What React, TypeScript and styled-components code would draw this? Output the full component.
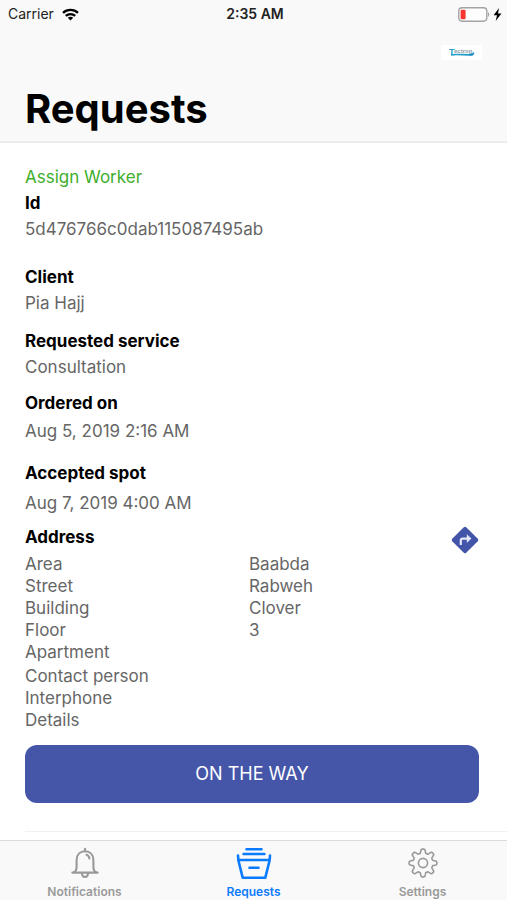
import React from "react";
import styled, { createGlobalStyle } from "styled-components";

const GlobalStyle = createGlobalStyle`
  * { box-sizing: border-box; }
  body {
    margin: 0;
    background: #fff;
    color: #000;
    font-family: Inter, "Liberation Sans", sans-serif;
  }
`;

const Screen = styled.div`
  min-height: 100vh;
  display: flex;
  flex-direction: column;
`;

const Header = styled.header`
  background: #f9f9f9;
  border-bottom: 2px solid #ececec;
`;

const StatusBar = styled.div`
  display: grid;
  grid-template-columns: 1fr auto 1fr;
  align-items: center;
  height: 28px;
  padding: 0 5px 0 8px;
  font-size: 14px;
  line-height: 20px;
  color: #222;
`;

const Carrier = styled.div`
  display: flex;
  align-items: center;
  gap: 8px;
`;

const Clock = styled.time`
  font-weight: 600;
`;

const Power = styled.div`
  display: flex;
  align-items: center;
  justify-content: flex-end;
  gap: 3px;
`;

const NavBar = styled.div`
  display: flex;
  justify-content: flex-end;
  padding: 17px 25px 0;
`;

const Title = styled.h1`
  margin: 0;
  padding: 25px 25px 8px;
  font-size: 40px;
  line-height: 48px;
  font-weight: 700;
`;

const Main = styled.main`
  flex: 1;
  padding-left: 25px;
`;

const Card = styled.article`
  display: flex;
  flex-direction: column;
  align-items: stretch;
  padding: 22px 28px 28px 0;
  border-bottom: 1px solid #f0f0f0;
`;

const AssignButton = styled.button`
  align-self: flex-start;
  margin: 0 0 3px;
  padding: 0;
  border: 0;
  background: none;
  font: inherit;
  font-size: 17px;
  line-height: 24px;
  color: #3fae2a;
  cursor: pointer;
`;

const Field = styled.section<{ $gap: number; $after: number }>`
  display: flex;
  flex-direction: column;
  gap: ${(p) => p.$gap}px;
  padding-bottom: ${(p) => p.$after}px;
`;

const Label = styled.h2`
  margin: 0;
  font-size: 17px;
  line-height: 22px;
  font-weight: 700;
`;

const Value = styled.p`
  margin: 0;
  font-size: 17px;
  line-height: 22px;
  color: #666;
`;

const AddressHead = styled.div`
  display: flex;
  align-items: flex-start;
  justify-content: space-between;
  height: 27px;
`;

const RouteButton = styled.button`
  display: flex;
  padding: 0;
  border: 0;
  background: none;
  cursor: pointer;
`;

const AddressList = styled.dl`
  display: grid;
  grid-template-columns: 1fr 1fr;
  margin: 0;
  padding-bottom: 2px;
  font-size: 17px;
  line-height: 22px;
  color: #666;
`;

const Term = styled.dt`
  grid-column: 1;
`;

const Detail = styled.dd`
  margin: 0 0 0 -3px;
`;

const PrimaryButton = styled.button`
  height: 58px;
  margin-top: 12px;
  border: 0;
  border-radius: 12px;
  background: #4556a9;
  color: #fff;
  font: inherit;
  font-size: 18px;
  line-height: 24px;
  cursor: pointer;
`;

const TabBar = styled.nav`
  position: sticky;
  bottom: 0;
  display: grid;
  grid-template-columns: repeat(3, 1fr);
  height: 60px;
  background: #f9f9f9;
  border-top: 1px solid #dcdcdc;
`;

const Tab = styled.a<{ $active?: boolean }>`
  display: flex;
  flex-direction: column;
  align-items: center;
  gap: 3px;
  padding-top: 4px;
  color: ${(p) => (p.$active ? "#0a7aff" : "#999")};
  font-size: 12px;
  line-height: 16px;
  font-weight: 600;
  text-decoration: none;
`;

const WifiIcon = () => (
  <svg width="17" height="13" viewBox="0 0 17 13" fill="none" stroke="#000" strokeWidth="2.3" aria-hidden="true">
    <path d="M1 4.8C5.2.9 11.8.9 16 4.8" />
    <path d="M3.8 7.9C6.4 5.4 10.6 5.4 13.2 7.9" />
    <path d="M8.5 12.6 5.8 9.8C7.3 8.5 9.7 8.5 11.2 9.8Z" fill="#000" stroke="none" />
  </svg>
);

const BatteryIcon = () => (
  <svg width="32" height="15" viewBox="0 0 32 15" role="img" aria-label="Battery low">
    <rect x="0.8" y="0.8" width="28" height="13.4" rx="3.4" fill="#fdfdfd" stroke="#a3a3a3" strokeWidth="1.4" />
    <rect x="2.6" y="2.8" width="5" height="9.4" rx="1.2" fill="#fa3530" />
    <path d="M30 5.2c1.6.5 1.6 4.1 0 4.6Z" fill="#a3a3a3" />
  </svg>
);

const BoltIcon = () => (
  <svg width="9" height="13" viewBox="0 0 9 13" role="img" aria-label="Charging">
    <path d="M6 0 .6 7.2H4L2.7 13 8.5 5.4H5Z" fill="#000" />
  </svg>
);

const BrandLogo = () => (
  <svg width="41" height="15" viewBox="0 0 41 15" role="img" aria-label="Brand">
    <rect width="41" height="15" fill="#fff" />
    <text x="8" y="9.5" fontFamily="Liberation Sans, sans-serif" fontSize="9" fontWeight="700" fill="#259fc8">T</text>
    <text x="13" y="8" fontFamily="Liberation Sans, sans-serif" fontSize="6" fontWeight="700" fill="#8a9ba3">ectron</text>
    <path d="M10 9.8C16 9 23 10 29 9.8" fill="none" stroke="#259fc8" strokeWidth="1.7" />
    <path d="M28 9.4c1.2-1.500 2.700.4 4.800-1.800.7 3-3.500 4-4.800 1.800Z" fill="#168cc0" stroke="#168cc0" strokeWidth=".7" />
  </svg>
);

const RouteIcon = () => (
  <svg width="28" height="28" viewBox="0 0 28 28" aria-hidden="true">
    <path d="M12.8 1.2q1.2-1 2.4 0l11.6 11.6q1 1.2 0 2.4L15.2 26.8q-1.2 1-2.4 0L1.2 15.2q-1-1.2 0-2.4Z" fill="#4355a9" />
    <path d="M9.8 19v-4.4q0-2 2-2h6" fill="none" stroke="#e4e8fa" strokeWidth="2.2" />
    <path d="M15.8 8.2 20.4 12.6 15.8 17Z" fill="#e4e8fa" />
  </svg>
);

const BellIcon = () => (
  <svg width="36" height="36" viewBox="0 0 36 36" fill="none" stroke="currentColor" strokeWidth="2.1" strokeLinecap="round" strokeLinejoin="round" aria-hidden="true">
    <path d="M18 3.7v2.5" />
    <path d="M5.3 27.6h25.4" />
    <path d="M7 27.2c2.2-1 2.6-2.7 2.6-6v-6C9.6 9.8 13 6.3 18 6.3s8.4 3.5 8.4 8.9v6c0 3.3.4 5 2.6 6" />
    <path d="M15 28c0 5.2 6 5.2 6 0" />
    <path d="M19.5 9.8c2 .6 2.7 1.7 2.9 3.7" />
  </svg>
);

const RequestsIcon = () => (
  <svg width="36" height="36" viewBox="0 0 36 36" fill="none" stroke="currentColor" strokeWidth="2.6" strokeLinecap="round" strokeLinejoin="round" aria-hidden="true">
    <path d="M10.5 4.2h15M7.6 9h20.8" />
    <path d="M2 10.5 2.3 15 6.7 32.8H29.3L33.7 15 34 10.5" />
    <path d="M2.8 15h30.4M13.5 22.7h9" />
  </svg>
);

const gearPoints = (() => {
  const steps = 96;
  const pts: string[] = [];
  for (let i = 0; i < steps; i++) {
    const a = (i / steps) * Math.PI * 2;
    const wave = Math.tanh(2.2 * Math.cos(8 * a)) / Math.tanh(2.2);
    const r = 11.9 + 2 * wave;
    pts.push(`${(18 + r * Math.sin(a)).toFixed(2)},${(18 - r * Math.cos(a)).toFixed(2)}`);
  }
  return pts.join(" ");
})();

const GearIcon = () => (
  <svg width="36" height="36" viewBox="0 0 36 36" fill="none" stroke="currentColor" strokeWidth="1.6" strokeLinejoin="round" aria-hidden="true">
    <polygon points={gearPoints} />
    <circle cx="18" cy="18" r="4.6" />
  </svg>
);

const fields = [
  { label: "Id", value: "5d476766c0dab115087495ab", gap: 4, after: 26 },
  { label: "Client", value: "Pia Hajj", gap: 4, after: 16 },
  { label: "Requested service", value: "Consultation", gap: 4, after: 14 },
  { label: "Ordered on", value: "Aug 5, 2019 2:16 AM", gap: 6, after: 20 },
  { label: "Accepted spot", value: "Aug 7, 2019 4:00 AM", gap: 8, after: 12 },
];

const location = [
  ["Area", "Baabda"],
  ["Street", "Rabweh"],
  ["Building", "Clover"],
  ["Floor", "3"],
  ["Apartment", ""],
];

const contact = [
  ["Contact person", ""],
  ["Interphone", ""],
  ["Details", ""],
];

const AddressRows = ({ rows }: { rows: string[][] }) => (
  <AddressList>
    {rows.map(([term, detail]) => (
      <React.Fragment key={term}>
        <Term>{term}</Term>
        <Detail>{detail}</Detail>
      </React.Fragment>
    ))}
  </AddressList>
);

export default function App() {
  return (
    <Screen>
      <GlobalStyle />
      <Header>
        <StatusBar>
          <Carrier>
            Carrier
            <WifiIcon />
          </Carrier>
          <Clock>2:35 AM</Clock>
          <Power>
            <BatteryIcon />
            <BoltIcon />
          </Power>
        </StatusBar>
        <NavBar>
          <BrandLogo />
        </NavBar>
        <Title>Requests</Title>
      </Header>
      <Main>
        <Card>
          <AssignButton type="button">Assign Worker</AssignButton>
          {fields.map((f) => (
            <Field key={f.label} $gap={f.gap} $after={f.after}>
              <Label>{f.label}</Label>
              <Value>{f.value}</Value>
            </Field>
          ))}
          <AddressHead>
            <Label>Address</Label>
            <RouteButton type="button" aria-label="Directions">
              <RouteIcon />
            </RouteButton>
          </AddressHead>
          <AddressRows rows={location} />
          <AddressRows rows={contact} />
          <PrimaryButton type="button">ON THE WAY</PrimaryButton>
        </Card>
      </Main>
      <TabBar>
        <Tab href="#notifications">
          <BellIcon />
          Notifications
        </Tab>
        <Tab href="#requests" $active aria-current="page">
          <RequestsIcon />
          Requests
        </Tab>
        <Tab href="#settings">
          <GearIcon />
          Settings
        </Tab>
      </TabBar>
    </Screen>
  );
}
